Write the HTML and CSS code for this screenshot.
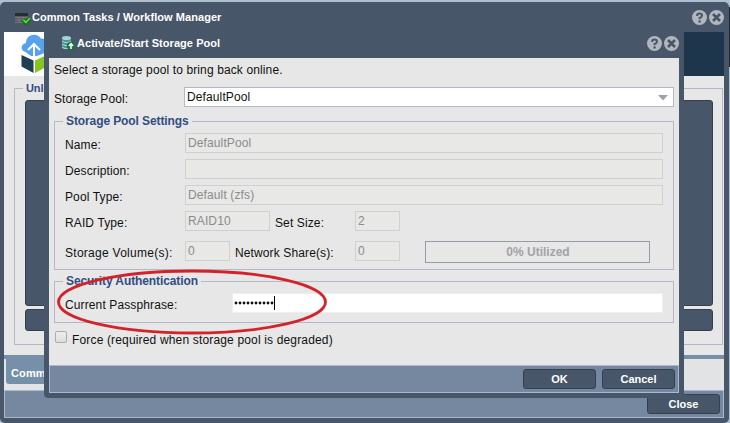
FILE: index.html
```html
<!DOCTYPE html>
<html lang="en">
<head>
<meta charset="utf-8">
<title>Workflow Manager</title>
<link rel="stylesheet" href="styles.css">
</head>
<body>
<main class="window">
  <header class="titlebar">
    <svg class="title-icon" width="16" height="16" viewBox="0 0 16 16"><rect x="0" y="4" width="13" height="10" rx="1" fill="#565a5a"/><path d="M0 5.500h13" stroke="#292d2d" stroke-width="3"/><path d="M0 8.500h13M0 11h10M0 13.500h8M4 8v6M8 8v6" stroke="#81847e" stroke-width=".7"/><path d="M8 11l3 3 4-5" fill="none" stroke="#116b18" stroke-width="4"/><path d="M8.500 11l2.500 2.500 4-4.500" fill="none" stroke="#52dc3a" stroke-width="1.800"/></svg>
    <h1 class="title">Common Tasks / Workflow Manager</h1>
    <div class="tools">
      <svg width="15" height="15" viewBox="0 0 15 15"><circle cx="7.500" cy="7.500" r="7.500" fill="#b2b6bd"/><path d="M5 6q0-2.400 2.500-2.400T10 5.700Q10 7 7.600 8v1.300" fill="none" stroke="#48566a" stroke-width="2"/><circle cx="7.600" cy="11.500" r="1.200" fill="#48566a"/></svg>
      <svg width="15" height="15" viewBox="0 0 15 15"><circle cx="7.500" cy="7.500" r="7.500" fill="#b2b6bd"/><path d="M4 4l7 7M11 4l-7 7" stroke="#48566a" stroke-width="2.700"/></svg>
    </div>
  </header>
  <section class="page">
    <div class="banner">
      <div class="logo-panel"><svg width="45" height="44" viewBox="0 0 45 44"><path d="M21.500 20c-5-1-5.500-8 .5-9 0-9 11-11 15-4.500 4.500-.5 6.500 3 6 6V20l-10 4h-6z" fill="#55a3ef"/><path d="M17.500 23l12 5.500V41l-12-6.500z" fill="#203e54"/><path d="M31 28.500L43 23v11.500L31 41z" fill="#84c51f"/><path d="M30 28V12M24 18l6-6 6 6" fill="none" stroke="#fff" stroke-width="2"/></svg></div>
    </div>
    <fieldset class="unlock">
      <legend>Unlock</legend>
      <div class="task-block large"></div>
      <div class="task-block small"></div>
    </fieldset>
    <nav class="tabs"><span class="tab">Common Tasks</span></nav>
  </section>
  <footer class="buttonbar outer-bar"><button class="button">Close</button></footer>
</main>
<i class="backdrop-edge"></i>

<section class="dialog">
  <header class="titlebar dialog-titlebar">
    <svg class="title-icon" width="16" height="16" viewBox="0 0 16 16"><path d="M2 3v9c0 3 9 3 9 0V3" fill="#4d929a"/><ellipse cx="6.500" cy="3" rx="4.500" ry="2" fill="#a6d5d2"/><path d="M2 6c2 2 7 2 9 0M2 9c2 2 7 2 9 0M2 12c2 2 7 2 9 0" fill="none" stroke="#b9dedb"/><circle cx="11" cy="11" r="4.200" fill="#15752c"/><path d="M11 14V9M8.800 11L11 8.700l2.200 2.300" fill="none" stroke="#fff" stroke-width="1.500"/></svg>
    <h2 class="title">Activate/Start Storage Pool</h2>
    <div class="tools">
      <svg width="15" height="15" viewBox="0 0 15 15"><circle cx="7.500" cy="7.500" r="7.500" fill="#b2b6bd"/><path d="M5 6q0-2.400 2.500-2.400T10 5.700Q10 7 7.600 8v1.300" fill="none" stroke="#48566a" stroke-width="2"/><circle cx="7.600" cy="11.500" r="1.200" fill="#48566a"/></svg>
      <svg width="15" height="15" viewBox="0 0 15 15"><circle cx="7.500" cy="7.500" r="7.500" fill="#b2b6bd"/><path d="M4 4l7 7M11 4l-7 7" stroke="#48566a" stroke-width="2.700"/></svg>
    </div>
  </header>
  <form class="form">
    <p class="intro">Select a storage pool to bring back online.</p>
    <div class="pool-row"><label>Storage Pool:</label><div class="field select"><span>DefaultPool</span><svg width="10" height="6" viewBox="0 0 10 6"><path d="M0 0h10L5 5.500z" fill="#a0a3a8"/></svg></div></div>
    <fieldset class="group settings">
      <legend>Storage Pool Settings</legend>
      <div class="row"><label>Name:</label><div class="field disabled wide">DefaultPool</div></div>
      <div class="row"><label>Description:</label><div class="field disabled wide"></div></div>
      <div class="row"><label>Pool Type:</label><div class="field disabled wide">Default (zfs)</div></div>
      <div class="row raid"><label>RAID Type:</label><div class="field disabled raid-field">RAID10</div><label class="set-label">Set Size:</label><div class="field disabled small-field">2</div></div>
      <div class="row volumes"><label class="volume-label">Storage Volume(s):</label><div class="field disabled small-field">0</div><label class="share-label">Network Share(s):</label><div class="field disabled small-field">0</div><div class="meter">0% Utilized</div></div>
    </fieldset>
    <fieldset class="group security">
      <legend>Security Authentication</legend>
      <div class="row password-row"><label>Current Passphrase:</label><div class="field password"><svg width="44" height="16" viewBox="0 0 44 16"><path d="M3 8H39.500" stroke="#111" stroke-width="2.800" stroke-linecap="round" stroke-dasharray="0 4"/><path d="M41.500 1v14" stroke="#000"/></svg></div></div>
    </fieldset>
    <div class="force"><span class="checkbox"></span><label>Force (required when storage pool is degraded)</label></div>
  </form>
  <footer class="buttonbar"><button class="button">OK</button><button class="button">Cancel</button></footer>
</section>
<svg class="annotation" width="274" height="68" viewBox="0 0 274 68"><ellipse cx="137" cy="34" rx="133.500" ry="31" fill="none" stroke="#d2232a" stroke-width="2.800"/></svg>
</body>
</html>
```
FILE: styles.css
```css
* { box-sizing: border-box; }
body { margin: 0; width: 730px; height: 423px; overflow: hidden; position: relative; background: #aebfd0; font: 12px/14px "Liberation Sans", sans-serif; letter-spacing: .12px; color: #111; }
h1, h2, p { margin: 0; }
fieldset { margin: 0; min-width: 0; padding: 0; border: 1px solid #b5b8c8; }
legend { color: #314d83; font-weight: bold; letter-spacing: -.1px; }
.window { width: 729px; height: 421px; margin-top: 2px; padding: 0 5px 4px 4px; background: #48566a; border-radius: 5px; display: flex; flex-direction: column; }
.titlebar { height: 30px; display: flex; align-items: center; padding-left: 11px; color: #fff; flex: none; }
.title { font-size: 11px; font-weight: bold; letter-spacing: .05px; white-space: nowrap; margin-left: 1px; }
.tools { display: flex; gap: 2px; margin-left: auto; }
.page { height: 358px; background: #e7e7e7; }
.banner { height: 44px; background: #1d364b; }
.logo-panel { width: 45px; height: 44px; background: #fff; }
.unlock { width: 709px; height: 264px; margin: 5px 1px 0 10px; padding: 5px 9px 0 10px; }
.unlock legend { margin-left: -2px; padding: 0 3px; font-size: 11px; }
.task-block { background: #48566a; border: 1px solid #344050; border-radius: 3px; }
.large { height: 206px; }
.small { height: 22px; margin-top: 3px; }
.tabs { height: 35px; margin-top: 10px; border-top: 4px solid #7590a8; background: #e2e3e4; }
.tab { display: block; height: 25px; width: 120px; margin-left: 2px; padding: 7px 5px; background: #7590a8; color: #fff; font-size: 11px; font-weight: bold; border-radius: 0 0 3px 3px; }
.buttonbar { height: 28px; flex: none; background: #7688a0; border: 1px solid #a7bad0; display: flex; justify-content: flex-end; align-items: center; gap: 6px; padding-right: 3px; }
.button { width: 73px; height: 20px; padding: 0; border: 1px solid #344050; border-radius: 3px; background: #48566a; color: #fff; font: bold 11px/14px "Liberation Sans", sans-serif; }
.backdrop-edge { position: absolute; left: 729px; top: 7px; width: 1px; height: 60px; background: #202734; }
.dialog { position: absolute; left: 44px; top: 28px; width: 640px; height: 370px; padding: 0 5px; background: #48566a; border-radius: 4px; display: flex; flex-direction: column; }
.dialog-titlebar { padding-left: 11px; }
.form { height: 307px; background: #e7e7e7; padding: 5px 5px 0; }
.intro { height: 24px; }
.pool-row { display: flex; height: 20px; }
.pool-row label { width: 130px; padding-top: 5px; }
.field { height: 20px; border: 1px solid #b5b8c8; background: #fff; padding: 2px; line-height: 14px; white-space: nowrap; }
.select { width: 490px; display: flex; justify-content: space-between; padding-right: 5px; }
.select svg { margin-top: 5px; }
.group legend { margin-left: 8px; padding: 0 3px; line-height: 14px; }
.settings { height: 156px; margin-top: 7px; }
.row { display: flex; height: 20px; margin: 0 0 6px 10px; }
.settings legend + .row { margin-top: 5px; }
.row label { width: 120px; flex: none; padding-top: 5px; white-space: nowrap; }
.disabled { background: #e8e8e6; border-color: #d0d0d0; color: #8b8b8b; }
.wide { width: 478px; }
.raid-field { width: 85px; }
.row .set-label { width: 85px; padding-left: 5px; }
.row .volume-label { letter-spacing: .27px; }
.row .share-label { width: 125px; padding-left: 5px; }
.small-field { width: 45px; }
.volumes { margin-top: 10px; }
.meter { width: 225px; height: 22px; margin-left: 25px; padding-left: 1px; border: 1px solid #969ba6; color: #a2a3a5; font-weight: bold; letter-spacing: 0; text-align: center; line-height: 20px; }
.security { height: 49px; margin-top: 4px; }
.password-row { margin-top: 5px; }
.row .password { width: 431px; margin-left: 47px; padding: 1px 0; border-color: #eee; }
.password svg { display: block; }
.force { display: flex; margin-top: 8px; letter-spacing: .16px; }
.checkbox { width: 12px; height: 12px; margin-left: 1px; border: 1px solid #acacac; border-radius: 2px; background: linear-gradient(#eee, #ddd); }
.force label { padding: 2px 0 0 5px; }
.annotation { position: absolute; left: 55px; top: 268px; }
```
